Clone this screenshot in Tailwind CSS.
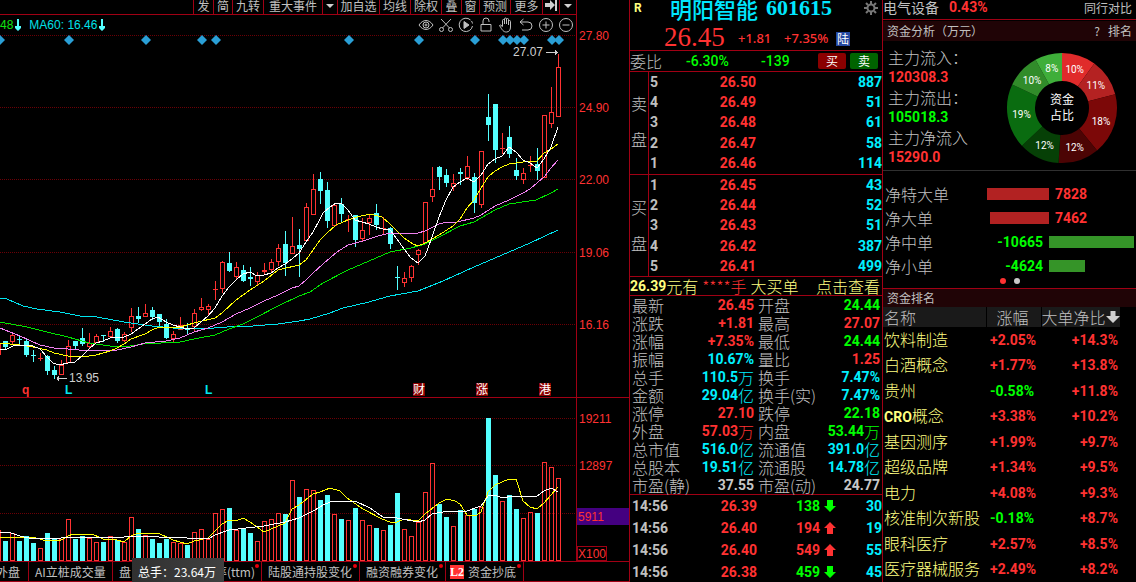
<!DOCTYPE html>
<html lang="zh-CN">
<head>
<meta charset="utf-8">
<meta name="viewport" content="width=device-width, initial-scale=1">
<title>明阳智能 601615</title>
<script src="https://cdn.jsdelivr.net/npm/@tailwindcss/browser@4"></script>
</head>
<body class="bg-black text-[#c0c0c0] font-['Noto_Sans_CJK_SC',sans-serif]">
<div class="flex min-h-screen overflow-hidden">

  <!-- Chart column -->
  <main class="flex min-w-0 flex-1 flex-col">
    <div class="mr-[52px] flex h-[15px] justify-end border-b border-[#a00014] text-xs leading-[11px]" id="toolbar"></div>

    <div class="mr-[52px] flex h-5 items-center justify-between border-r border-[#a00014] pr-0.5">
      <div class="flex items-center gap-2 font-['Liberation_Sans',sans-serif] text-xs leading-none text-[#00e0e8]">
        <span class="flex items-center gap-0.5 text-[#10e010]">48
          <svg class="h-3 w-1.5" viewBox="0 0 6 12" fill="#54ffff"><path d="M2 0h2v7h2v2L3 12 0 9V7h2z"/></svg></span>
        <span class="flex items-center gap-0.5">MA60: 16.46
          <svg class="h-3 w-1.5" viewBox="0 0 6 12" fill="#54ffff"><path d="M2 0h2v7h2v2L3 12 0 9V7h2z"/></svg></span>
      </div>
      <div class="flex items-center gap-1" id="tools"></div>
    </div>

    <svg id="price" class="block h-[363px] w-full overflow-visible" viewBox="0 35 629 363" preserveAspectRatio="xMaxYMin meet" shape-rendering="crispEdges" font-family="Liberation Sans, sans-serif" font-size="12"></svg>
    <svg id="volume" class="block h-[163px] w-full" viewBox="0 398 629 163" preserveAspectRatio="xMaxYMin meet" shape-rendering="crispEdges" font-family="Liberation Sans, sans-serif" font-size="12"></svg>

    <nav class="relative flex h-[21px] border-y border-[#a00014] text-xs leading-[19px] whitespace-nowrap">
      <a href="#" class="flex w-[29px] justify-end overflow-hidden border-r border-[#a00014] pr-2">外盘</a>
      <a href="#" class="w-[84px] border-r border-[#a00014] pl-1.5">AI立桩成交量</a>
      <a href="#" class="relative flex w-[149px] justify-between border-r border-[#a00014] pr-1.5 pl-1.5"><span>盘</span><span>率(ttm)</span><i class="absolute top-0.5 right-0.5 size-1 rounded-full bg-red-600"></i></a>
      <a href="#" class="relative w-[98px] border-r border-[#a00014] pl-1.5">陆股通持股变化<i class="absolute top-0.5 right-0.5 size-1 rounded-full bg-red-600"></i></a>
      <a href="#" class="relative w-[86px] border-r border-[#a00014] pl-1.5">融资融券变化<i class="absolute top-0.5 right-0.5 size-1 rounded-full bg-red-600"></i></a>
      <a href="#" class="relative flex w-[78px] items-center gap-1 border-r border-[#a00014] pl-1"><b class="w-3.5 bg-[#ff3232] text-center font-['Liberation_Serif',serif] leading-[14px] text-white">L2</b>资金抄底<i class="absolute top-0.5 right-0.5 size-1 rounded-full bg-red-600"></i></a>
      <div class="absolute -top-1 left-[132px] h-6 w-[92px] bg-linear-to-r from-[#303030] to-[#404040] px-1.5 pt-1 leading-5 text-white">总手：23.64万</div>
    </nav>
  </main>

  <!-- Quote column -->
  <section class="flex w-[253px] shrink-0 flex-col border-l border-[#a00014]">
    <header class="border-b border-[#a00014]">
      <div class="flex h-[22px] items-start pr-1 pl-1">
        <b class="w-9 font-['Roboto',sans-serif] text-xs leading-4 text-[#ffff80]">R</b>
        <h1 class="flex gap-2 text-[22px] leading-4 font-medium whitespace-nowrap text-[#00e6ff]">明阳智能<b class="font-['Liberation_Serif',serif]">601615</b></h1>
        <button class="ml-auto pt-px" aria-label="设置"><svg class="size-3.5" viewBox="0 0 14 14" fill="none" stroke="#777"><circle cx="7" cy="7" r="3.5" stroke-width="2"/><path d="M7 0v3M7 11v3M0 7h3M11 7h3M2 2l2 2M10 10l2 2M12 2l-2 2M4 10l-2 2" stroke-width="2"/></svg></button>
      </div>
      <div class="flex h-7 items-center pl-[34px] font-['Noto_Sans',sans-serif] text-[13px] font-medium text-[#ff3232]">
        <span class="w-[74px] pt-0.5 font-['Liberation_Serif',serif] text-[27px] leading-6 font-normal">26.45</span>
        <span class="w-[46px] pt-1.5">+1.81</span><span class="w-[52px] pt-1.5">+7.35%</span>
        <span class="mt-1.5 size-[14px] bg-[#2448a0] text-center font-['Noto_Sans_CJK_SC',sans-serif] text-xs leading-[14px] font-normal text-white">陆</span>
      </div>
    </header>

    <div class="flex h-[21px] items-center border-b border-[#a00014] text-base leading-none">
      <span class="w-14 font-light">委比</span>
      <span class="w-[75px] font-['Roboto',sans-serif] text-sm font-medium text-[#00ff00]">-6.30%</span>
      <span class="flex-1 font-['Roboto',sans-serif] text-sm font-medium text-[#00ff00]">-139</span>
      <button class="mr-1 h-4 w-7 rounded-xs bg-[#8b0000] text-xs leading-4 text-white">买</button>
      <button class="mr-1 h-4 w-7 rounded-xs bg-[#006400] text-xs leading-4 text-white">卖</button>
    </div>

    <div class="flex h-[103px] border-b border-[#a00014]">
      <div class="flex w-[19px] shrink-0 flex-col items-center justify-center gap-5 border-r border-[#a00014] pb-1 text-base leading-none font-light"><span>卖</span><span>盘</span></div>
      <table class="h-[101px] flex-1 font-['Roboto',sans-serif] text-sm leading-5 font-bold"><tbody id="asks"></tbody></table>
    </div>
    <div class="flex h-[102px] border-b border-[#a00014]">
      <div class="flex w-[19px] shrink-0 flex-col items-center justify-center gap-5 border-r border-[#a00014] pb-0.5 text-base leading-none font-light"><span>买</span><span>盘</span></div>
      <table class="h-[101px] flex-1 font-['Roboto',sans-serif] text-sm leading-5 font-bold"><tbody id="bids"></tbody></table>
    </div>

    <div class="flex h-[19px] items-center border-b border-[#a00014] pr-0.5 pb-px text-base leading-none font-light whitespace-nowrap text-[#ffff80]">
      <b class="font-['Roboto',sans-serif] text-sm font-bold">26.39</b>元有<span class="mr-1 ml-1 text-[#ff3232]">****手</span>大买单<a href="#" class="ml-auto">点击查看</a>
    </div>

    <dl class="grid grid-cols-2 gap-x-1 border-b border-[#a00014] pr-0.5 pl-0.5" id="stats"></dl>

    <table class="w-full font-['Roboto',sans-serif] text-sm leading-[22px] font-bold"><tbody id="ticks"></tbody></table>
  </section>

  <!-- Sector column -->
  <aside class="flex w-[254px] shrink-0 flex-col border-l border-[#a00014]">
    <div class="flex h-5 border-b border-[#a00014] text-sm leading-[15px]">
      <a href="#">电气设备</a><b class="ml-2.5 font-['Roboto',sans-serif] text-[#ff3232]">0.43%</b>
      <a href="#" class="mr-1 ml-auto text-xs leading-[15px]">同行对比</a>
    </div>
    <div class="mt-px flex h-5 items-center bg-[#200406] pr-1 pl-1 text-xs">
      <h2>资金分析（万元）</h2><button class="mr-2 ml-auto" aria-label="帮助">?</button><a href="#">排名</a>
    </div>
    <div class="flex h-[130px] justify-between border-b border-[#303030] pl-[5px]">
      <dl class="pt-1.5 text-base leading-5 font-light whitespace-nowrap">
        <dt>主力流入：</dt><dd class="font-['Roboto',sans-serif] text-sm leading-5 font-bold text-[#ff3232]">120308.3</dd>
        <dt>主力流出：</dt><dd class="font-['Roboto',sans-serif] text-sm leading-5 font-bold text-[#00ff00]">105018.3</dd>
        <dt>主力净流入</dt><dd class="font-['Roboto',sans-serif] text-sm leading-5 font-bold text-[#ff3232]">15290.0</dd>
      </dl>
      <svg id="donut" class="mt-[11px] mr-[18px] size-[112px]" viewBox="-56 -56 112 112" text-anchor="middle" fill="#fff"></svg>
    </div>

    <div class="flex h-[117px] flex-col pt-[11px]">
      <div id="flows"></div>
      <div class="flex gap-2 pl-[117px]"><i class="size-1.5 rounded-full bg-[#ff3232]"></i><i class="size-1.5 rounded-full bg-[#c8c8c8]"></i></div>
    </div>

    <h2 class="h-[19px] border-t border-[#a00014] bg-[#200406] pl-1 text-xs leading-[18px]">资金排名</h2>
    <table class="h-[275px] w-full text-left text-base leading-5 font-light whitespace-nowrap">
      <thead><tr class="h-5">
        <th class="w-[103px] border-r border-black bg-[#1a1a1a] pl-px font-light">名称</th>
        <th class="w-[55px] border-r border-black bg-[#1a1a1a] pl-2.5 font-light">涨幅</th>
        <th class="p-0 font-light"><span class="mr-4 flex items-center bg-[#1a1a1a]">大单净比<svg class="size-3.5" viewBox="0 0 14 14" fill="#d0d0d0"><path d="M4.500 1h5v5H14L7 13 0 6h4.500z"/></svg></span></th>
      </tr></thead>
      <tbody id="sectors"></tbody>
    </table>
  </aside>
</div>

<script>
const $ = id => document.getElementById(id);
const RED = '#ff3232', CYAN = '#54ffff', LINE = '#a00014';

// Toolbar
const down = '<svg class="h-3 w-2" viewBox="0 0 8 12" fill="#d0d0d0"><path d="M0 4h8L4 8z"/></svg>';
const end = '<svg class="h-3 w-3" viewBox="0 0 12 12" fill="#d0d0d0"><path d="M0 3h5V0l5 5-5 5V7H0zM10 0h2v11h-2z"/></svg>';
$('toolbar').innerHTML = [['发',19],['简',19],['九转',31],['重大事件',59],[down,15],['加自选',42],['均线',31],['除权',31],['叠',20],['窗',18],['预测',31],['更多',32],[end,17],[down,17]]
  .map(([t, w], i) => `<button class="flex justify-center border-r border-[#a00014] whitespace-nowrap ${i ? '' : 'box-content border-l'}" style="width:${w}px"${t[0] === '<' ? ' aria-label="展开"' : ''}>${t}</button>`).join('');

// Chart tools
$('tools').innerHTML = [
  ['显示', '<path d="M1 8c4-6 10-6 14 0-4 6-10 6-14 0z"/><circle cx="8" cy="8" r="3"/><circle cx="8" cy="8" r="1"/>'],
  ['剪切', '<path d="M3 2l8.500 9M13 2L4.500 11"/><circle cx="3.500" cy="12.500" r="2"/><circle cx="12.500" cy="12.500" r="2"/>'],
  ['播放', '<path d="M12.500 3A6.700 6.700 0 1 0 14.500 9M14.500 6.500A6.700 6.700 0 0 0 13.500 4"/><path d="M6 4.500v7l5-3.500z" fill="#c0c0c0"/>'],
  ['锁定', '<path d="M3 7.500h10V14H3zM5 7.500V4a3 3 0 0 1 6 0v1"/>'],
  ['拖动', '<path d="M4.500 9V3.500a1 1 0 0 1 2 0V7 2a1 1 0 0 1 2 0v5-4.500a1 1 0 0 1 2 0V8 4.500a1 1 0 0 1 2 0V10c0 3-1.500 5-4 5-3 0-4-1.500-7-6.500 1-1 2-.5 3 1.500"/>'],
  ['撤销', '<path d="M5.500 2L2 5l3.500 3M2 5h8a4 4 0 0 1 0 8H4"/>'],
  ['放大', '<circle cx="8" cy="8" r="6.500"/><path d="M4.500 8h7M8 4.500v7"/>'],
  ['缩小', '<circle cx="8" cy="8" r="6.500"/><path d="M4.500 8h7"/>']
].map(([n, p]) => `<button aria-label="${n}"><svg class="size-4" viewBox="0 0 16 16" fill="none" stroke="#c0c0c0">${p}</svg></button>`).join('');

// Candles: high, low, body top, body bottom, falling; volume top (y positions)
const candles = [
[343,355,343,355,0,530],[341,349,341,347,1,541],[332,344,335,342,0,533],[335,344,339,340,1,541],[339,357,341,355,1,536],[350,362,355,356,1,543],[353,361,358,359,0,548],[355,375,356,371,1,533],[366,379,370,375,1,538],[360,375,365,375,0,539],
[340,363,346,363,0,519],[341,349,341,346,1,539],[328,346,338,344,1,536],[333,349,343,347,0,538],[334,343,336,343,0,542],[335,342,335,336,1,542],[327,338,331,337,0,536],[328,343,329,341,1,540],[332,342,334,341,0,542],[308,332,316,328,0,517],
[307,323,316,319,1,529],[304,317,313,317,0,535],[307,320,310,317,1,539],[314,326,314,322,1,543],[319,339,324,338,1,539],[331,342,334,339,0,542],[317,330,325,330,0,543],[323,335,329,330,1,545],[309,332,313,327,0,532],[298,311,307,310,0,529],
[304,315,306,310,0,539],[281,300,289,290,0,513],[261,293,262,289,0,509],[252,272,263,271,1,508],[262,280,267,277,0,530],[265,282,270,281,1,529],[267,286,277,279,1,533],[272,285,275,282,0,541],[263,274,270,272,0,521],[259,273,262,270,0,519],
[244,266,248,262,0,513],[231,276,244,263,1,514],[217,254,246,254,0,480],[229,277,245,249,1,497],[203,242,207,241,0,489],[174,215,189,215,0,490],[172,204,179,191,1,500],[182,228,190,221,1,495],[203,227,205,226,0,514],[198,222,204,214,1,519],
[215,232,219,220,0,520],[215,247,215,240,1,508],[218,241,230,239,0,520],[214,235,218,223,0,525],[204,230,213,225,1,528],[217,234,228,229,0,530],[227,249,228,244,1,525],[266,290,277,278,1,493],[272,287,278,283,0,529],[265,282,266,278,0,536],
[249,265,250,255,0,522],[202,243,202,243,0,492],[167,202,189,197,0,463],[166,190,167,177,1,504],[169,187,175,183,1,517],[174,191,183,187,0,526],[168,185,172,174,1,510],[156,180,166,178,0,515],[173,213,177,203,1,509],[151,208,151,205,0,507],
[94,141,117,125,1,418],[104,163,104,150,1,475],[133,154,148,149,0,501],[126,158,137,154,1,495],[158,180,170,176,1,509],[168,184,173,180,0,518],[156,172,165,166,0,512],[148,180,164,171,1,513],[115,178,115,178,0,462],[87,128,112,124,0,467],[54,117,67,117,0,478]];

const box = (x, t, b, falling) => falling || b - t < 3
  ? `<rect x="${x - 2}" y="${t}" width="5" height="${b - t}" fill="${falling ? CYAN : RED}"/>`
  : `<rect x="${x - 1.5}" y="${t + .5}" width="4" height="${b - t - 1}" fill="none" stroke="${RED}"/>`;
const grid = ys => ys.map(y => `<path d="M0 ${y}.5H576" stroke="#6a0006" stroke-dasharray="1 1"/>`).join('');
const curve = (c, pts) => `<polyline fill="none" stroke="${c}" points="${pts}"/>`;
const diamond = x => `<path d="M${x} 35l5 5-5 5-5-5z" fill="#2a9fd6" shape-rendering="auto"/>`;
const label = (x, y, t, c, extra = '') => `<text x="${x}" y="${y}" fill="${c}" ${extra}>${t}</text>`;

$('price').innerHTML = grid([35, 107, 179, 252, 324])
 + candles.map(([h, l, t, b, f], i) => { const x = 7 * i - 2, c = f ? CYAN : RED;
    return `<path d="M${x + .5} ${h}V${t}M${x + .5} ${b}V${l}" stroke="${c}"/>` + box(x, t, b, f); }).join('')
 + curve('#00e6f0', '0,298 7,299 23,306 37,309 60,312 80,316 97,317 124,322 152,326 173,328 201,329 227,327 253,326 278,324 299,321 310,319 330,313 343,308 369,302 390,296 418,291 443,281 474,267 509,252 530,243 558,230')
 + curve('#00e600', '0,322 27,327 47,332 68,337 89,343 110,346 124,347 143,344 180,342 194,339 215,335 229,329 243,324 257,317 278,306 299,296 310,292 323,283 348,270 369,261 390,252 411,248 425,244 439,237 460,226 474,222 495,210 509,204 536,200 551,193 558,189')
 + curve('#f080f0', '0,328 20,336 40,345 54,348 68,349 89,351 117,350 131,347 145,343 166,341 180,338 194,332 208,328 222,322 236,314 250,308 264,301 278,295 292,288 299,286 306,280 313,273 323,264 337,252 348,245 363,241 378,236 390,233 418,233 425,231 439,224 447,222 457,222 474,218 481,215 495,206 509,200 523,193 530,189 537,183 544,177 551,168 558,160')
 + curve('#ffff00', '0,343 20,345 33,347 47,350 54,353 68,356 82,356 89,356 96,355 110,351 117,348 124,344 131,339 145,334 152,330 159,327 180,327 194,323 215,318 222,313 236,300 250,290 264,281 278,270 299,265 306,260 313,250 320,240 327,233 336,225 348,220 357,217 370,214 382,217 390,224 404,238 413,244 418,246 425,243 439,235 453,226 460,219 467,208 474,200 481,188 488,177 495,171 502,167 509,164 523,162 537,161 544,153 551,149 558,144')
 + curve('#ffffff', '0,350 7,349 13,346 19,345 26,345 33,346 40,349 47,357 53,363 59,365 68,363 75,362 82,356 89,349 96,343 103,341 110,338 117,337 124,337 131,334 138,329 145,324 152,319 158,317 166,322 173,325 180,327 187,329 194,328 201,322 208,316 215,308 222,296 229,287 236,280 243,274 250,272 257,276 264,275 271,273 278,268 285,264 292,259 299,253 306,242 313,232 320,219 323,213 330,207 336,203 342,204 348,210 355,220 362,222 369,224 376,227 383,229 390,230 397,239 404,249 411,258 418,263 425,256 428,248 432,237 439,217 446,200 453,187 460,182 467,178 474,182 481,175 488,164 495,159 502,156 509,147 516,152 523,160 530,163 537,168 544,159 551,147 558,127')
 + [0, 69, 146, 202, 216, 349, 419, 475, 503, 510, 517, 524, 552, 559].map(diamond).join('')
 + `<path d="M546 52.500h12M555 50v5M556 51v3M57 378.500h10M57 377v3M58 376v5" stroke="#d0d0d0" fill="none"/>`
 + label(513, 56, '27.07', '#d0d0d0') + label(69, 382, '13.95', '#d0d0d0')
 + label(22, 394, 'q', RED, 'font-weight="bold"') + label(65, 394, 'L', '#00e6f0', 'font-weight="bold"') + label(205, 394, 'L', '#00e6f0', 'font-weight="bold"')
 + [[413, '财'], [476, '涨'], [539, '港']].map(([x, t]) => `<rect x="${x}" y="383" width="12" height="13" fill="#8b0000"/>` + label(x, 394, t, '#fff', 'font-family="Noto Sans CJK SC, sans-serif"')).join('')
 + [[40, '27.80'], [112, '24.90'], [184, '22.00'], [257, '19.06'], [329, '16.16']].map(([y, t]) => label(579, y, t, RED)).join('')
 + `<path d="M576.500 35V398M0 397.500H629" stroke="${LINE}"/>`;

$('volume').innerHTML = grid([418, 465, 513])
 + candles.map((k, i) => box(7 * i - 2, k[5], 561, k[4])).join('')
 + curve('#ffff00', '0,537 33,537 43,540 61,540 68,536 73,534 92,534 103,539 117,540 124,542 131,536 138,533 158,533 173,540 187,544 194,541 208,538 222,524 229,520 236,521 243,518 250,522 264,532 285,523 292,509 299,505 313,494 320,492 330,488 340,491 347,498 363,509 382,519 390,522 397,522 404,519 418,521 425,514 439,503 447,499 455,501 460,504 467,515 477,515 481,512 488,492 495,485 509,479 516,479 518,485 523,501 530,507 537,509 544,503 558,487')
 + curve('#ffffff', '0,532 8,532 20,536 33,539 61,538 68,537 124,537 131,536 159,537 187,538 201,538 208,539 215,535 229,530 264,526 285,522 299,518 313,511 325,504 333,501 355,501 370,508 383,517 397,518 418,522 425,520 432,514 443,512 467,511 481,506 488,496 495,495 502,498 513,496 537,496 544,491 551,488 558,492')
 + `<rect x="577" y="508" width="52" height="17" fill="#440080"/><rect x="577.500" y="546.500" width="29" height="14" fill="none" stroke="${LINE}"/>`
 + label(579, 423, '19211', RED) + label(579, 470, '12897', RED) + label(578, 521, '5911', RED) + label(578, 558, 'X100', RED)
 + `<path d="M576.500 398V561" stroke="${LINE}"/>`;

// Order book
const book = rows => rows.map(([n, p, q]) => `<tr><td class="w-4 p-0 pl-px">${n}</td><td class="w-[91px] p-0 text-right text-[#ff3232]">${p}</td><td class="p-0 text-right text-[#00f0ff]">${q}</td></tr>`).join('');
$('asks').innerHTML = book([[5,'26.50',887],[4,'26.49',51],[3,'26.48',61],[2,'26.47',58],[1,'26.46',114]]);
$('bids').innerHTML = book([[1,'26.45',43],[2,'26.44',52],[3,'26.43',51],[4,'26.42',387],[5,'26.41',499]]);

const tone = { r: 'text-[#ff3232]', g: 'text-[#00ff00]', c: 'text-[#00f0ff]', w: 'text-[#c8c8c8]' };
$('stats').innerHTML = [['最新','26.45','r'],['开盘','24.44','g'],['涨跌','+1.81','r'],['最高','27.07','r'],['涨幅','+7.35%','r'],['最低','24.44','g'],['振幅','10.67%','c'],['量比','1.25','r'],['总手','110.5万','c'],['换手','7.47%','c'],['金额','29.04亿','c'],['换手(实)','7.47%','c'],['涨停','27.10','r'],['跌停','22.18','g'],['外盘','57.03万','r'],['内盘','53.44万','g'],['总市值','516.0亿','c'],['流通值','391.0亿','c'],['总股本','19.51亿','c'],['流通股','14.78亿','c'],['市盈(静)','37.55','w'],['市盈(动)','24.77','w']]
 .map(([k, v, t]) => `<div class="flex h-[18px] items-center justify-between pb-px text-base leading-none font-light whitespace-nowrap"><dt>${k}</dt><dd class="flex items-center ${tone[t]}"><b class="font-['Roboto',sans-serif] text-sm leading-none font-bold">${v.replace(/[万亿]/, '')}</b>${(v.match(/[万亿]/) || [''])[0]}</dd></div>`).join('');

$('ticks').innerHTML = [['26.39',138,0,30],['26.40',194,1,19],['26.40',549,1,55],['26.38',459,0,45]].map(([p, v, up, n]) =>
 `<tr><td class="w-[50px] p-0 pl-0.5">14:56</td><td class="w-[77px] p-0 text-right text-[#ff3232]">${p}</td><td class="w-[63px] p-0 text-right ${up ? 'text-[#ff3232]' : 'text-[#00ff00]'}">${v}</td><td class="p-0 pl-1"><svg class="size-3" viewBox="0 0 12 12" fill="${up ? RED : '#00ff00'}"><path d="${up ? 'M6 0l6 6H9v6H3V6H0z' : 'M6 12L0 6h3V0h6v6h3z'}"/></svg></td><td class="p-0 text-right text-[#00f0ff]">${n}</td></tr>`).join('');

// Capital distribution ring
let turn = 0;
$('donut').innerHTML = [[10,'#e02b2b'],[11,'#b42222'],[18,'#7c0808'],[12,'#4c0404'],[12,'#064006'],[19,'#0a6c10'],[10,'#318c2a'],[8,'#3fae3a']].map(([p, c]) => {
  const at = (v, r) => { const a = v / 100 * 2 * Math.PI; return `${(r * Math.sin(a)).toFixed(2)} ${(-r * Math.cos(a)).toFixed(2)}`; };
  const a = turn, b = turn += p, [x, y] = at((a + b) / 2, 41).split(' ');
  return `<path d="M${at(a, 55)}A55 55 0 0 1 ${at(b, 55)}L${at(b, 27)}A27 27 0 0 0 ${at(a, 27)}z" fill="${c}"/><text x="${x}" y="${+y + 4}" font-family="Roboto, sans-serif" font-size="10">${p}%</text>`;
}).join('') + '<text y="-4" font-size="12">资金</text><text y="12" font-size="12">占比</text>';

$('flows').innerHTML = [['净特大单',7828],['净大单',7462],['净中单',-10665],['净小单',-4624]].map(([k, v]) => {
  const num = c => `<b class="font-['Roboto',sans-serif] text-sm font-bold ${c}">${v}</b>`, w = Math.abs(v) / 10665 * 85;
  return `<div class="flex h-6 items-center pl-0.5 text-base leading-none font-light"><div class="flex w-[164px] items-center justify-between"><span>${k}</span>${v > 0 ? `<i class="h-3 bg-[#b22222]" style="width:${Math.floor(w)}px"></i>` : num('pr-1.5 text-[#00ff00]')}</div>${v > 0 ? num('pl-1.5 text-[#ff3232]') : `<i class="h-3 bg-[#359428]" style="width:${Math.floor(w)}px"></i>`}</div>`;
}).join('');

$('sectors').innerHTML = [['饮料制造','+2.05','14.3'],['白酒概念','+1.77','13.8'],['贵州','-0.58','11.8'],['<b class="font-[\'Roboto\',sans-serif] text-sm leading-none font-bold">CRO</b>概念','+3.38','10.2'],['基因测序','+1.99','9.7'],['超级品牌','+1.34','9.5'],['电力','+4.08','9.3'],['核准制次新股','-0.18','8.7'],['眼科医疗','+2.57','8.5'],['医疗器械服务','+2.49','8.2']]
 .map(([n, a, b]) => `<tr><td class="p-0 pl-px pb-0.5 text-[#ffff80]">${n}</td><td class="p-0 pl-1 font-['Roboto',sans-serif] text-sm font-bold ${a[0] === '+' ? 'text-[#ff3232]' : 'text-[#00ff00]'}">${a}%</td><td class="p-0 pr-[18px] text-right font-['Roboto',sans-serif] text-sm font-bold text-[#ff3232]">+${b}%</td></tr>`).join('');
</script>
</body>
</html>
